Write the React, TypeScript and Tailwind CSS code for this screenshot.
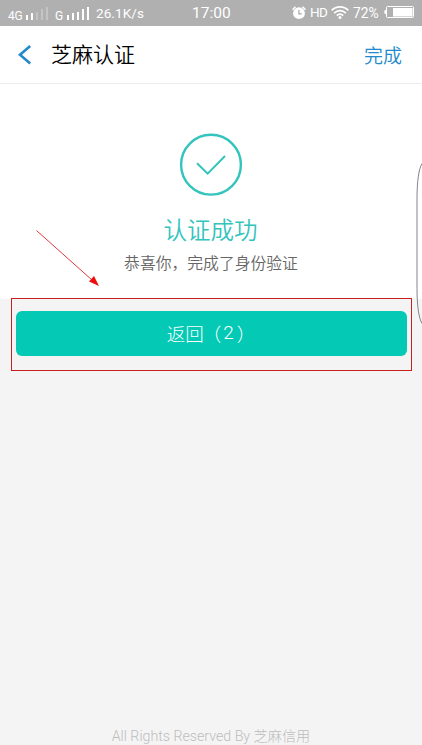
interface SignalBarsProps {
  active: number;
  className?: string;
}

function SignalBars({ active, className }: SignalBarsProps) {
  const heights = [5, 7, 8, 11, 13];

  return (
    <svg width="22" height="13" viewBox="0 0 22 13" className={className} aria-hidden="true">
      {heights.map((height, i) => (
        <rect
          key={height}
          x={i * 5}
          y={13 - height}
          width="2"
          height={height}
          fill="#fff"
          opacity={i < active ? 1 : 0.25}
        />
      ))}
    </svg>
  );
}

function AlarmIcon() {
  return (
    <svg width="14" height="14" viewBox="0 0 14 14" fill="none" aria-hidden="true">
      <circle cx="7" cy="7.2" r="5.9" fill="#fff" />
      <path d="M1 3.2 3 1.2M13 3.2 11 1.2" stroke="#fff" strokeWidth="1.6" strokeLinecap="round" />
      <path d="M6.9 4v3.9h2.8" stroke="#a5a5a5" strokeWidth="1.2" />
    </svg>
  );
}

function WifiIcon() {
  return (
    <svg width="18" height="13" viewBox="0 0 18 13" fill="none" stroke="#fff" strokeWidth="1.7" aria-hidden="true">
      <path d="M.7 4.4C5.4-.2 12.6-.2 17.3 4.4" />
      <path d="M3.2 7.1c3.3-3.2 8.3-3.2 11.6 0" />
      <path d="M5.8 9.7c1.9-1.8 4.5-1.8 6.4 0" />
      <circle cx="9" cy="11.4" r="1.5" fill="#fff" stroke="none" />
    </svg>
  );
}

function BatteryIcon() {
  return (
    <svg width="31" height="13" viewBox="0 0 31 13" fill="none" aria-hidden="true">
      <rect x="2.5" y=".5" width="27" height="11" rx="1" stroke="#fff" />
      <path d="M1.5 4C.6 4.4.6 7.6 1.5 8Z" fill="#fff" stroke="#fff" />
      <rect x="9" y="2" width="19.5" height="8.5" fill="#fff" />
    </svg>
  );
}

function StatusBar() {
  return (
    <div className="grid h-[26px] grid-cols-[192px_1fr_130px] items-center bg-[#b0b0b0] font-['Roboto',sans-serif] text-white">
      <div className="flex h-full items-center pl-[8px]">
        <span className="w-[18px] pt-[5px] text-[12px] leading-none tracking-[-0.3px]">4G</span>
        <SignalBars active={2} className="mt-px" />
        <span className="ml-[7px] w-[12px] pt-[5px] text-[12px] leading-none">G</span>
        <SignalBars active={5} className="mt-px" />
        <span className="ml-[7px] pt-px text-[13.5px] leading-none tracking-[0.1px]">26.1K/s</span>
      </div>
      <span className="pt-[2px] text-[15.5px] leading-none">17:00</span>
      <div className="flex h-full items-center pb-px">
        <AlarmIcon />
        <span className="ml-[4px] w-[21px] pt-px text-[13.5px] leading-none tracking-[-0.6px]">HD</span>
        <WifiIcon />
        <span className="ml-[4px] w-[31px] pt-[2px] text-[13.8px] leading-none">72%</span>
        <BatteryIcon />
      </div>
    </div>
  );
}

function Header() {
  return (
    <header className="flex h-[58px] items-center border-b border-[#ededed] bg-white pl-[18px] pr-[20px]">
      <button type="button" aria-label="返回">
        <svg width="14" height="20" viewBox="0 0 14 20" fill="none" aria-hidden="true">
          <path d="M12.2 1 2 9.8l10.2 8.8" stroke="#2489cc" strokeWidth="2.6" />
        </svg>
      </button>
      <h1 className="ml-[19px] pb-[2px] text-[21px] font-[350] leading-none text-black">芝麻认证</h1>
      <button type="button" className="ml-auto pb-px text-[19px] font-[350] leading-none text-[#2489cc]">
        完成
      </button>
    </header>
  );
}

function Result() {
  return (
    <section className="flex h-[215px] flex-col items-center bg-white pt-[49px]">
      <svg width="64" height="64" viewBox="0 0 64 64" fill="none" stroke="#32c4bd" aria-hidden="true">
        <circle cx="32" cy="31.7" r="29.9" strokeWidth="2.4" />
        <path d="M18 30.2 28.7 40.7 46 23" strokeWidth="2" />
      </svg>
      <h2 className="mt-[17px] pr-px text-[23.5px] font-[350] leading-[30px] text-[#32c4bd]">认证成功</h2>
      <p className="mt-[7px] text-[15.8px] font-[350] leading-[24px] text-[#666]">恭喜你，完成了身份验证</p>
    </section>
  );
}

export default function App() {
  return (
    <main className="relative flex h-[745px] w-[422px] flex-col overflow-hidden bg-[#f4f4f4] font-['Noto_Sans_CJK_SC',sans-serif]">
      <StatusBar />
      <Header />
      <Result />

      <div className="relative -mt-px ml-[11px] h-[73px] w-[401px] border border-[#c3201f] pl-[3.5px] pr-[4.5px] pt-3">
        <button
          type="button"
          className="flex h-[45px] w-full justify-center rounded-[6px] bg-[#04cab5] text-[18.5px] font-light leading-[44px] text-white"
        >
          <span>返回</span>
          <span className="-ml-px">（</span>
          <span className="ml-[2px] mr-[3px] font-['Roboto',sans-serif] text-[19px] font-light">2</span>
          <span>）</span>
        </button>
      </div>

      <footer className="mt-auto text-center font-['Roboto','Noto_Sans_CJK_SC',sans-serif] text-[14.2px] font-light leading-[17px] text-[#bdbdbd]">
        All Rights Reserved By 芝麻信用
      </footer>

      {/* pointer to the button and the edge panel handle */}
      <svg
        className="pointer-events-none absolute left-0 top-0"
        width="422"
        height="745"
        viewBox="0 0 422 745"
        fill="none"
        aria-hidden="true"
      >
        <path d="M36.5 230.5 92 280" stroke="#e0393a" />
        <path d="M99 286 89 281.5 94 276Z" fill="#f20d0d" />
        <path d="M422 163.5c-3 5-5 17-5 35v90c0 18 2 30 5 35" stroke="#858585" />
      </svg>
    </main>
  );
}
